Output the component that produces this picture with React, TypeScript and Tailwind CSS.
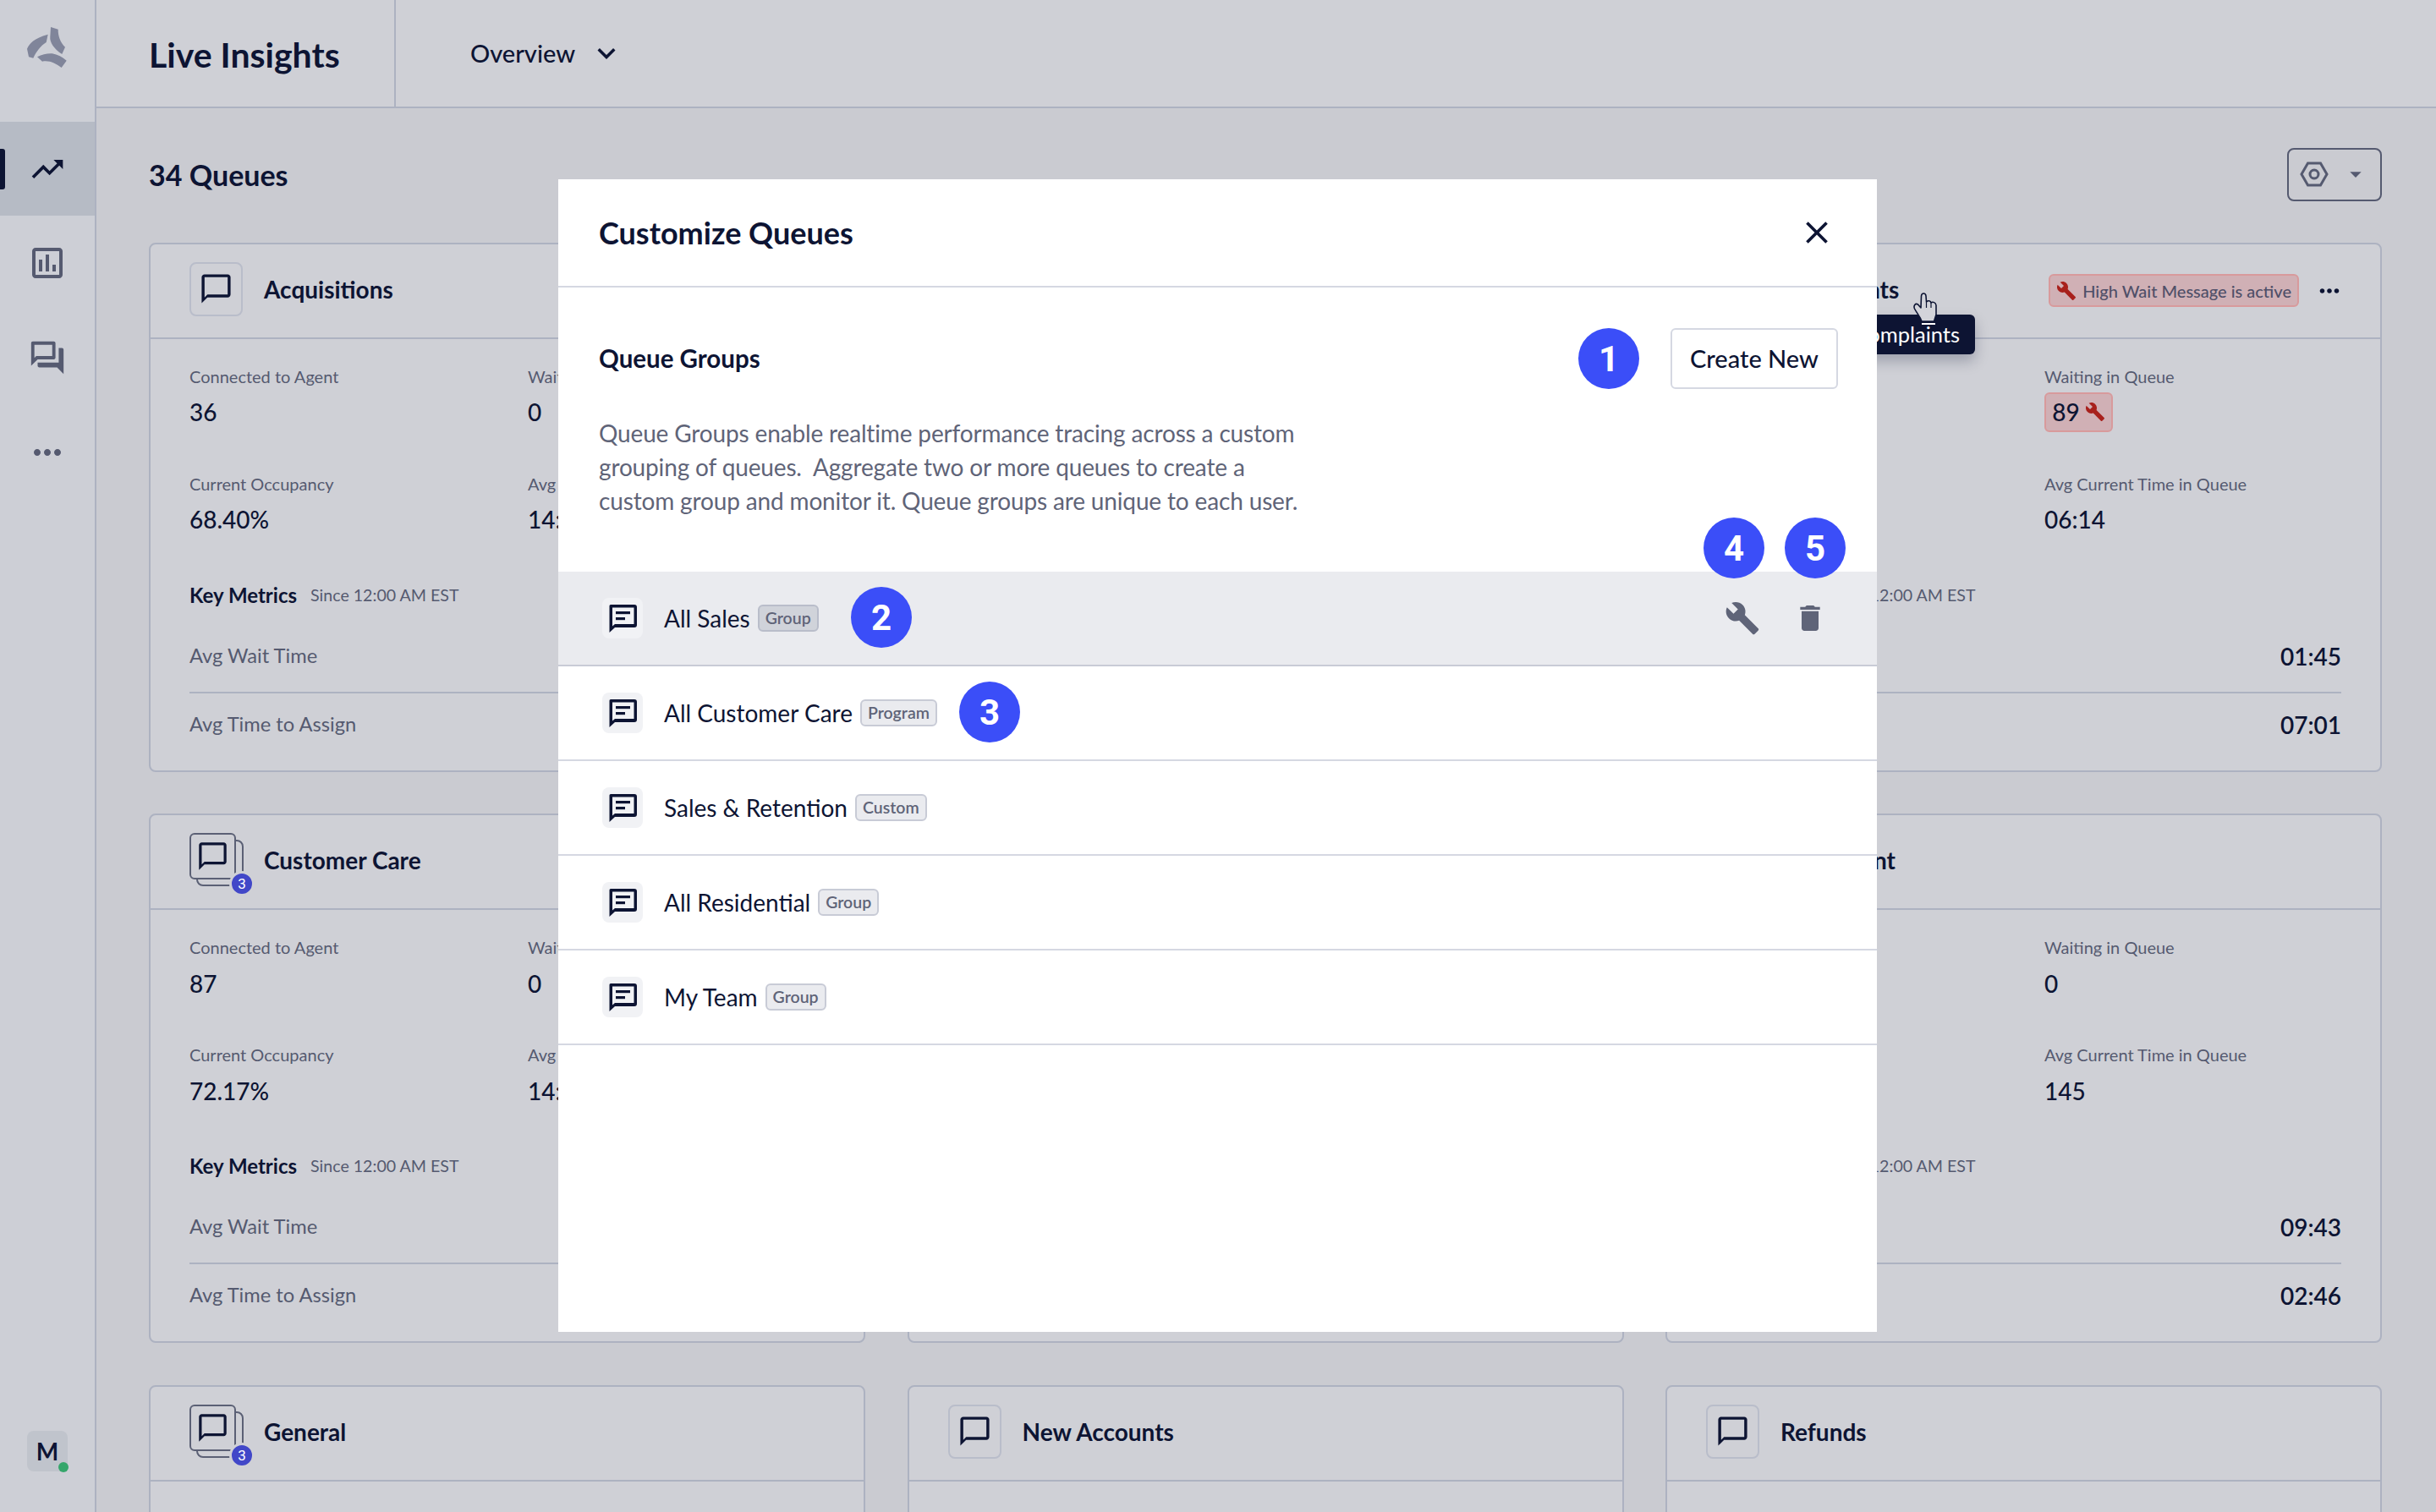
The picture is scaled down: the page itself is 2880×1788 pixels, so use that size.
import React from 'react';
import {
  MdTrendingUp,
  MdOutlineAssessment,
  MdOutlineForum,
  MdMoreHoriz,
  MdChatBubbleOutline,
  MdBuild,
  MdDelete,
  MdClose,
  MdKeyboardArrowDown,
  MdArrowDropDown,
} from 'react-icons/md';

interface Stat {
  label: string;
  value: string;
  alert?: boolean;
}

interface Queue {
  name?: string;
  stacked?: boolean;
  stats?: Stat[];
  wait?: string;
  assign?: string;
}

const queues: Queue[] = [
  {
    name: 'Acquisitions',
    stats: [
      { label: 'Connected to Agent', value: '36' },
      { label: 'Waiting in Queue', value: '0' },
      { label: 'Current Occupancy', value: '68.40%' },
      { label: 'Avg Current Time in Queue', value: '14:22' },
    ],
    wait: '00:52',
    assign: '03:18',
  },
  {},
  {
    name: 'Complaints',
    stats: [
      { label: 'Connected to Agent', value: '52' },
      { label: 'Waiting in Queue', value: '89', alert: true },
      { label: 'Current Occupancy', value: '81.02%' },
      { label: 'Avg Current Time in Queue', value: '06:14' },
    ],
    wait: '01:45',
    assign: '07:01',
  },
  {
    name: 'Customer Care',
    stacked: true,
    stats: [
      { label: 'Connected to Agent', value: '87' },
      { label: 'Waiting in Queue', value: '0' },
      { label: 'Current Occupancy', value: '72.17%' },
      { label: 'Avg Current Time in Queue', value: '14:08' },
    ],
    wait: '01:12',
    assign: '04:37',
  },
  {},
  {
    name: 'Enrollment',
    stats: [
      { label: 'Connected to Agent', value: '41' },
      { label: 'Waiting in Queue', value: '0' },
      { label: 'Current Occupancy', value: '64.90%' },
      { label: 'Avg Current Time in Queue', value: '145' },
    ],
    wait: '09:43',
    assign: '02:46',
  },
  { name: 'General', stacked: true },
  { name: 'New Accounts' },
  { name: 'Refunds' },
];

const groups = [
  { name: 'All Sales', tag: 'Group' },
  { name: 'All Customer Care', tag: 'Program' },
  { name: 'Sales & Retention', tag: 'Custom' },
  { name: 'All Residential', tag: 'Group' },
  { name: 'My Team', tag: 'Group' },
];

function Logo() {
  return (
    <svg viewBox="0 0 72 72" className="w-[72px] h-[72px] text-[#80859a]" fill="currentColor">
      <path d="M40 12 L48.700 14.700 C48.500 22 51 30 57 35.700 L53.300 44 C44 38 38.500 30 39.300 23.500 Z" />
      <path d="M36.700 20.700 L34.700 30 C28 34 23 41 19.300 48.700 L14 47.300 L12 37.700 C15 31 20 25.300 36.700 20.700 Z" />
      <path d="M24 47.300 C30 44 36 43 41.700 43.300 C48 44.500 54 47.500 58.700 51.700 L52.700 60 C46 55 38 51 30 52.700 Z" />
    </svg>
  );
}

function Cursor() {
  return (
    <svg viewBox="0 0 72 72" className="absolute left-[2240px] top-[330px] w-[72px] h-[72px]">
      <path
        d="M32 50 C30 44 26 40 23.500 35 C22 31.500 24.500 28 27.500 30 L31 34 L31.500 20 C32 16 36.500 16 37 20 L37.500 27 C39.500 25 42.500 25.500 43 28 C45 26.500 48.500 27.500 49 31 L49 42 L46.500 50 Z"
        fill="#d3d4da"
        stroke="#0d1433"
        strokeWidth="1.600"
        strokeLinejoin="round"
      />
      <path d="M37.500 27 L37.500 34 M43 28 L43 34" stroke="#0d1433" strokeWidth="1.200" fill="none" />
      <rect x="32" y="52" width="16" height="2" fill="#ffffff" />
    </svg>
  );
}

function Circle({ n, className }: { n: number; className: string }) {
  return (
    <div
      className={`absolute w-[72px] h-[72px] rounded-full bg-[#3b4ef8] text-white flex items-center justify-center font-['Roboto',sans-serif] font-bold text-[42px] ${className}`}
    >
      {n}
    </div>
  );
}

function QueueIcon({ stacked }: { stacked?: boolean }) {
  if (stacked) {
    return (
      <div className="relative w-[63px] h-[64px]">
        <div className="absolute left-[8px] top-[8px] w-[56px] h-[55px] rounded-[8px] border-2 border-[#5b6075]" />
        <div className="absolute left-0 top-0 w-[55px] h-[55px] rounded-[6px] border-2 border-[#5b6075] bg-[#cfd0d6] flex items-center justify-center">
          <MdChatBubbleOutline className="w-[39px] h-[39px] text-[#0d1433]" />
        </div>
        <div className="absolute left-[47px] top-[45px] w-[30px] h-[30px] rounded-full border-[3px] border-[#cfd0d6] bg-[#4147c8] text-white text-[17px] leading-[24px] text-center font-['Roboto',sans-serif]">
          3
        </div>
      </div>
    );
  }
  return (
    <div className="w-[63px] h-[64px] rounded-[8px] border-2 border-[#b9bdca] flex items-center justify-center">
      <MdChatBubbleOutline className="w-[41px] h-[41px] text-[#0d1433]" />
    </div>
  );
}

function StatBlock({ stat }: { stat: Stat }) {
  return (
    <div>
      <div className="h-[28px] leading-[28px] text-[20px] text-[#555a70]">{stat.label}</div>
      <div className="mt-[5px] h-[47px] flex items-center">
        {stat.alert ? (
          <span className="h-[47px] w-[81px] flex items-center justify-center gap-[6px] rounded-[6px] border-2 border-[#d89a9c] bg-[#d0b0b5] text-[28px] font-medium text-[#0d1433]">
            {stat.value}
            <MdBuild className="w-[24px] h-[24px] text-[#a8201c]" />
          </span>
        ) : (
          <span className="text-[28px] font-medium text-[#0d1433]">{stat.value}</span>
        )}
      </div>
    </div>
  );
}

function QueueCard({ queue }: { queue: Queue }) {
  return (
    <div className="h-[626px] rounded-[8px] border-2 border-[#adb2c1] bg-[#cfd0d6] overflow-hidden">
      <div className="h-[112px] border-b-2 border-[#adb2c1] pl-[46px] pr-[43px] pb-[4px] flex items-center">
        <QueueIcon stacked={queue.stacked} />
        <span className="ml-[25px] text-[28px] font-bold text-[#0d1433]">{queue.name}</span>
        {queue.name === 'Complaints' && (
          <div className="ml-auto mt-[4px] flex items-center gap-[19px]">
            <span className="h-[39px] px-[7px] flex items-center gap-[7px] rounded-[6px] border-2 border-[#d89a9c] bg-[#d0b0b5] text-[20px] font-medium text-[#4f4f68]">
              <MdBuild className="w-[24px] h-[24px] text-[#a8201c]" />
              High Wait Message is active
            </span>
            <MdMoreHoriz className="w-[34px] h-[34px] text-[#0d1433]" />
          </div>
        )}
      </div>
      {queue.stats && (
        <div className="pl-[46px] pr-[46px] pt-[30px]">
          <div className="grid grid-cols-[400px_1fr] gap-y-[47px]">
            {queue.stats.map(s => (
              <StatBlock key={s.label} stat={s} />
            ))}
          </div>
          <div className="mt-[50px] h-[32px] flex items-center gap-[16px]">
            <span className="text-[24px] font-bold text-[#0d1433]">Key Metrics</span>
            <span className="text-[19.6px] text-[#555a70]">Since 12:00 AM EST</span>
          </div>
          <div className="mt-[14px] h-[86px] border-b-2 border-[#adb2c1] flex items-center justify-between">
            <span className="text-[23.7px] text-[#555a70]">Avg Wait Time</span>
            <span className="text-[28px] font-semibold text-[#0d1433]">{queue.wait}</span>
          </div>
          <div className="h-[74px] flex items-center justify-between">
            <span className="text-[23.7px] text-[#555a70]">Avg Time to Assign</span>
            <span className="text-[28px] font-semibold text-[#0d1433]">{queue.assign}</span>
          </div>
        </div>
      )}
    </div>
  );
}

function GroupRow({ group, active }: { group: (typeof groups)[number]; active: boolean }) {
  return (
    <div
      className={`relative h-[112px] pl-[52px] pr-[40px] border-b-2 flex items-center ${
        active ? 'bg-[#eaebef] border-[#c8cbd6]' : 'border-[#d5d8e2]'
      }`}
    >
      <div className="w-[48px] h-[48px] rounded-[8px] bg-[#f1f2f5] flex items-center justify-center">
        <svg viewBox="0 0 34 34" className="w-[34px] h-[34px] text-[#0d1433]" fill="currentColor">
          <path d="M3 1h28a3 3 0 0 1 3 3v21a3 3 0 0 1-3 3H8l-6.500 6V2.500A1.500 1.500 0 0 1 3 1zm2 3.500v22l3-2.500h22.500V4.500z" />
          <rect x="9" y="9" width="17" height="3.200" />
          <rect x="9" y="16" width="11" height="3.200" />
        </svg>
      </div>
      <span className="ml-[25px] text-[28px] text-[#0d1433]">{group.name}</span>
      <span
        className={`ml-[9px] h-[32px] px-[7px] flex items-center rounded-[6px] border-2 text-[19.5px] font-semibold text-[#5f6478] ${
          active ? 'bg-[#d0d3da] border-[#b9bdca]' : 'bg-[#eaebef] border-[#c8cbd6]'
        }`}
      >
        {group.tag}
      </span>
      {active && (
        <div className="ml-auto mr-[19px] flex items-center gap-[39px]">
          <MdBuild className="w-[42px] h-[42px] text-[#5f6478]" />
          <MdDelete className="w-[40px] h-[40px] text-[#5f6478]" />
        </div>
      )}
    </div>
  );
}

export default function App() {
  return (
    <div className="relative w-[2880px] h-[1788px] overflow-hidden flex bg-[#cacbd1] font-['Lato',sans-serif]">
      {/* Sidebar */}
      <aside className="w-[114px] shrink-0 border-r-2 border-[#adb2c1] bg-[#cdcfd6] flex flex-col items-center">
        <div className="h-[144px] w-full pt-[20px] flex justify-center">
          <Logo />
        </div>
        <div className="relative w-full h-[111px] bg-[#b6bbc5] flex items-center justify-center">
          <div className="absolute left-0 top-[32px] w-[6px] h-[48px] rounded-r-[3px] bg-[#0d1433]" />
          <MdTrendingUp className="w-[44px] h-[44px] text-[#0d1433]" />
        </div>
        <div className="h-[112px] w-full flex items-center justify-center">
          <MdOutlineAssessment className="w-[48px] h-[48px] text-[#555a70]" />
        </div>
        <div className="h-[112px] w-full flex items-center justify-center">
          <MdOutlineForum className="w-[46px] h-[46px] text-[#555a70]" />
        </div>
        <div className="h-[112px] w-full flex items-center justify-center">
          <MdMoreHoriz className="w-[48px] h-[48px] text-[#555a70]" />
        </div>
        <div className="relative mt-auto mb-[48px] w-[48px] h-[48px] rounded-[8px] bg-[#c0c4cc] flex items-center justify-center text-[28px] font-bold text-[#0d1433]">
          M
          <div className="absolute right-[-1px] bottom-[-1px] w-[12px] h-[12px] rounded-full bg-[#35a66b]" />
        </div>
      </aside>

      {/* Main */}
      <main className="flex-1 min-w-0">
        <header className="h-[128px] border-b-2 border-[#adb2c1] bg-[#cfd0d6] flex">
          <div className="w-[354px] pl-[62px] pt-[3px] border-r-2 border-[#adb2c1] flex items-center">
            <h1 className="text-[41px] font-bold text-[#0d1433]">Live Insights</h1>
          </div>
          <div className="pl-[88px] flex items-center">
            <span className="text-[29px] font-medium text-[#0d1433]">Overview</span>
            <MdKeyboardArrowDown className="ml-[16px] w-[42px] h-[42px] text-[#0d1433]" />
          </div>
        </header>
        <div className="pl-[62px] pr-[64px]">
          <div className="h-[158.7px] flex items-center justify-between pb-[2px]">
            <h2 className="text-[34px] font-bold text-[#0d1433]">34 Queues</h2>
            <button className="w-[112px] h-[63px] rounded-[8px] border-2 border-[#555a70] flex items-center pl-[13px] pr-[13px] justify-between">
              <svg viewBox="0 0 34 30" className="w-[34px] h-[30px] text-[#555a70]" fill="none" stroke="currentColor" strokeWidth="3">
                <path d="M9.500 2h15L32 15l-7.500 13h-15L2 15z" />
                <circle cx="17" cy="15" r="5" />
              </svg>
              <MdArrowDropDown className="w-[32px] h-[32px] text-[#555a70]" />
            </button>
          </div>
          <div className="grid grid-cols-[847px_847px_847px] gap-x-[49.5px] gap-y-[49.5px]">
            {queues.map((q, i) => (
              <QueueCard key={i} queue={q} />
            ))}
          </div>
        </div>
      </main>

      {/* Tooltip and cursor on the Complaints title */}
      <div className="absolute left-[2172px] top-[372px] w-[163px] h-[47px] rounded-[6px] bg-[#0d1433] text-white text-[25.5px] flex items-center justify-end pr-[18px] shadow-[0_8px_16px_rgba(13,20,51,0.25)]">
        Complaints
      </div>
      <Cursor />

      {/* Modal */}
      <section className="absolute left-[660px] top-[212px] w-[1559px] h-[1363px] bg-white">
        <div className="h-[128px] border-b-2 border-[#d5d8e2] pl-[48px] pr-[49px] flex items-center justify-between">
          <h3 className="text-[36px] font-bold text-[#0d1433]">Customize Queues</h3>
          <MdClose className="w-[44px] h-[44px] text-[#0d1433]" />
        </div>
        <div className="h-[336px] pl-[48px] pr-[46px] pt-[48px]">
          <div className="h-[72px] flex items-center justify-between">
            <h4 className="text-[29.5px] font-bold text-[#0d1433]">Queue Groups</h4>
            <button className="w-[198px] h-[72px] rounded-[6px] border-2 border-[#d5d8e2] text-[29px] font-medium text-[#0d1433]">
              Create New
            </button>
          </div>
          <p className="mt-[32px] w-[860px] text-[28px] tracking-[-0.15px] leading-[40px] text-[#5f6478] whitespace-pre">
            {'Queue Groups enable realtime performance tracing across a custom\ngrouping of queues.  Aggregate two or more queues to create a\ncustom group and monitor it. Queue groups are unique to each user.'}
          </p>
        </div>
        <div>
          {groups.map((g, i) => (
            <GroupRow key={g.name} group={g} active={i === 0} />
          ))}
        </div>
        <Circle n={1} className="left-[1206px] top-[176px]" />
        <Circle n={2} className="left-[346px] top-[482px]" />
        <Circle n={3} className="left-[474px] top-[594px]" />
        <Circle n={4} className="left-[1354px] top-[400px]" />
        <Circle n={5} className="left-[1450px] top-[400px]" />
      </section>
    </div>
  );
}
